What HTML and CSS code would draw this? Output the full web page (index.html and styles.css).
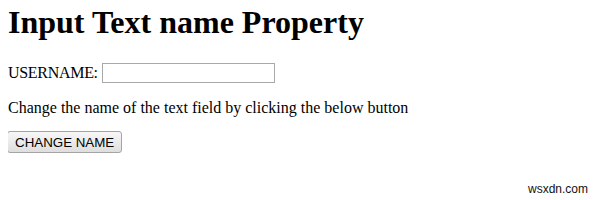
FILE: index.html
```html
<!DOCTYPE html>
<html lang="en">

<head>
    <meta charset="UTF-8">
    <title>Input Text name Property</title>
    <link rel="stylesheet" href="styles.css">
</head>

<body>
    <h1>Input Text name Property</h1>

    <div class="row">
        <span class="label">USERNAME:</span> <input type="text" id="USR" name="USERNAME">
    </div>

    <p>Change the name of the text field by clicking the below button</p>

    <button class="btn" onclick="changeName()">CHANGE NAME</button>

    <div class="mark">wsxdn.com</div>

    <script>
        function changeName() {
            document.getElementById("USR").name = "NEW_USERNAME";
        }
    </script>
</body>

</html>
```

FILE: styles.css
```css
body {
    font-family: "Liberation Serif", "Times New Roman", serif;
    font-size: 16px;
    color: #000;
    background-color: #fff;
    margin: 4px 8px 8px;
}

h1 {
    font-size: 32px;
    font-weight: bold;
    margin: 0 0 22px;
}

.row {
    line-height: 20px;
}

.label {
    letter-spacing: -0.3px;
}

.row input {
    width: 173px;
    height: 20px;
    box-sizing: border-box;
    border: 1px solid #a9a9a9;
    padding: 1px 2px;
    margin: 0;
    vertical-align: bottom;
    font-family: "Liberation Sans", Arial, sans-serif;
    font-size: 13px;
}

p {
    margin: 16px 0 14px;
}

.btn {
    font-family: "Liberation Sans", Arial, sans-serif;
    font-size: 13.33px;
    color: #000;
    padding: 1px 7px;
    height: 22px;
    margin-left: -1px;
    border: 1px solid #a4a4a4;
    border-radius: 3px;
    background: linear-gradient(#f7f7f7, #dedede);
}

/* watermark */
.mark {
    position: absolute;
    right: 12px;
    bottom: 4px;
    font-family: "Liberation Sans", Arial, sans-serif;
    font-size: 12px;
    color: #111;
}
```
